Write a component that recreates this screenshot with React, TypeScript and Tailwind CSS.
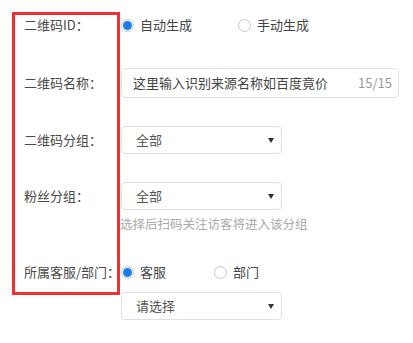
const font = { fontFamily: '"Noto Sans CJK SC", "Noto Sans", sans-serif' }

function Radio({ checked, label, className = "" }: { checked?: boolean; label: string; className?: string }) {
  return (
    <label className={`flex items-center gap-[6px] ${className}`}>
      <span className="flex h-[13px] w-[13px] items-center justify-center rounded-full border border-[#c8c8c8] bg-white">
        {checked && <span className="h-[9px] w-[9px] rounded-full bg-[#1a7cf0]" />}
      </span>
      <span className="text-[13px] text-[#444]">{label}</span>
    </label>
  )
}

function Select({ value }: { value: string }) {
  return (
    <div className="flex h-[28px] w-[161px] items-center justify-between rounded-[4px] border border-[#e0e0e0] pl-[14px] pr-[6px]">
      <span className="text-[13px] text-[#555]">{value}</span>
      <svg width="6" height="5" viewBox="0 0 6 5" className="mr-[1px]">
        <path d="M0 0 H6 L3 5 Z" fill="#333" />
      </svg>
    </div>
  )
}

function Label({ children }: { children: string }) {
  return <div className="w-[97px] shrink-0 text-[13px] text-[#4a4a4a]">{children}</div>
}

export default function App() {
  return (
    <div className="relative h-[343px] w-[413px] bg-white pl-[24px]" style={font}>
      <div className="h-[10px]" />
      <div className="flex h-[30px] items-center">
        <Label>二维码ID：</Label>
        <Radio checked label="自动生成" />
        <Radio label="手动生成" className="ml-[46px]" />
      </div>

      <div className="mt-[28px] flex items-center">
        <Label>二维码名称：</Label>
        <div className="flex h-[30px] w-[278px] items-center justify-between rounded-[4px] border border-[#e0e0e0] pl-[11px] pr-[6px]">
          <span className="text-[13px] text-[#444]">这里输入识别来源名称如百度竟价</span>
          <span className="text-[13px] text-[#999]">15/15</span>
        </div>
      </div>

      <div className="mt-[28px] flex items-center">
        <Label>二维码分组：</Label>
        <Select value="全部" />
      </div>

      <div className="mt-[28px] flex items-center">
        <Label>粉丝分组：</Label>
        <Select value="全部" />
      </div>
      <div className="ml-[96px] mt-[6px] h-[16px] text-[12.5px] leading-[16px] text-[#aaa]">
        选择后扫码关注访客将进入该分组
      </div>

      <div className="mt-[30px] flex h-[20px] items-center">
        <Label>所属客服/部门：</Label>
        <Radio checked label="客服" />
        <Radio label="部门" className="ml-[48px]" />
      </div>
      <div className="ml-[97px] mt-[10px]">
        <Select value="请选择" />
      </div>

      <div className="pointer-events-none absolute left-[12px] top-[12px] h-[283px] w-[108px] border-[3px] border-[#f03030]" />
    </div>
  )
}
